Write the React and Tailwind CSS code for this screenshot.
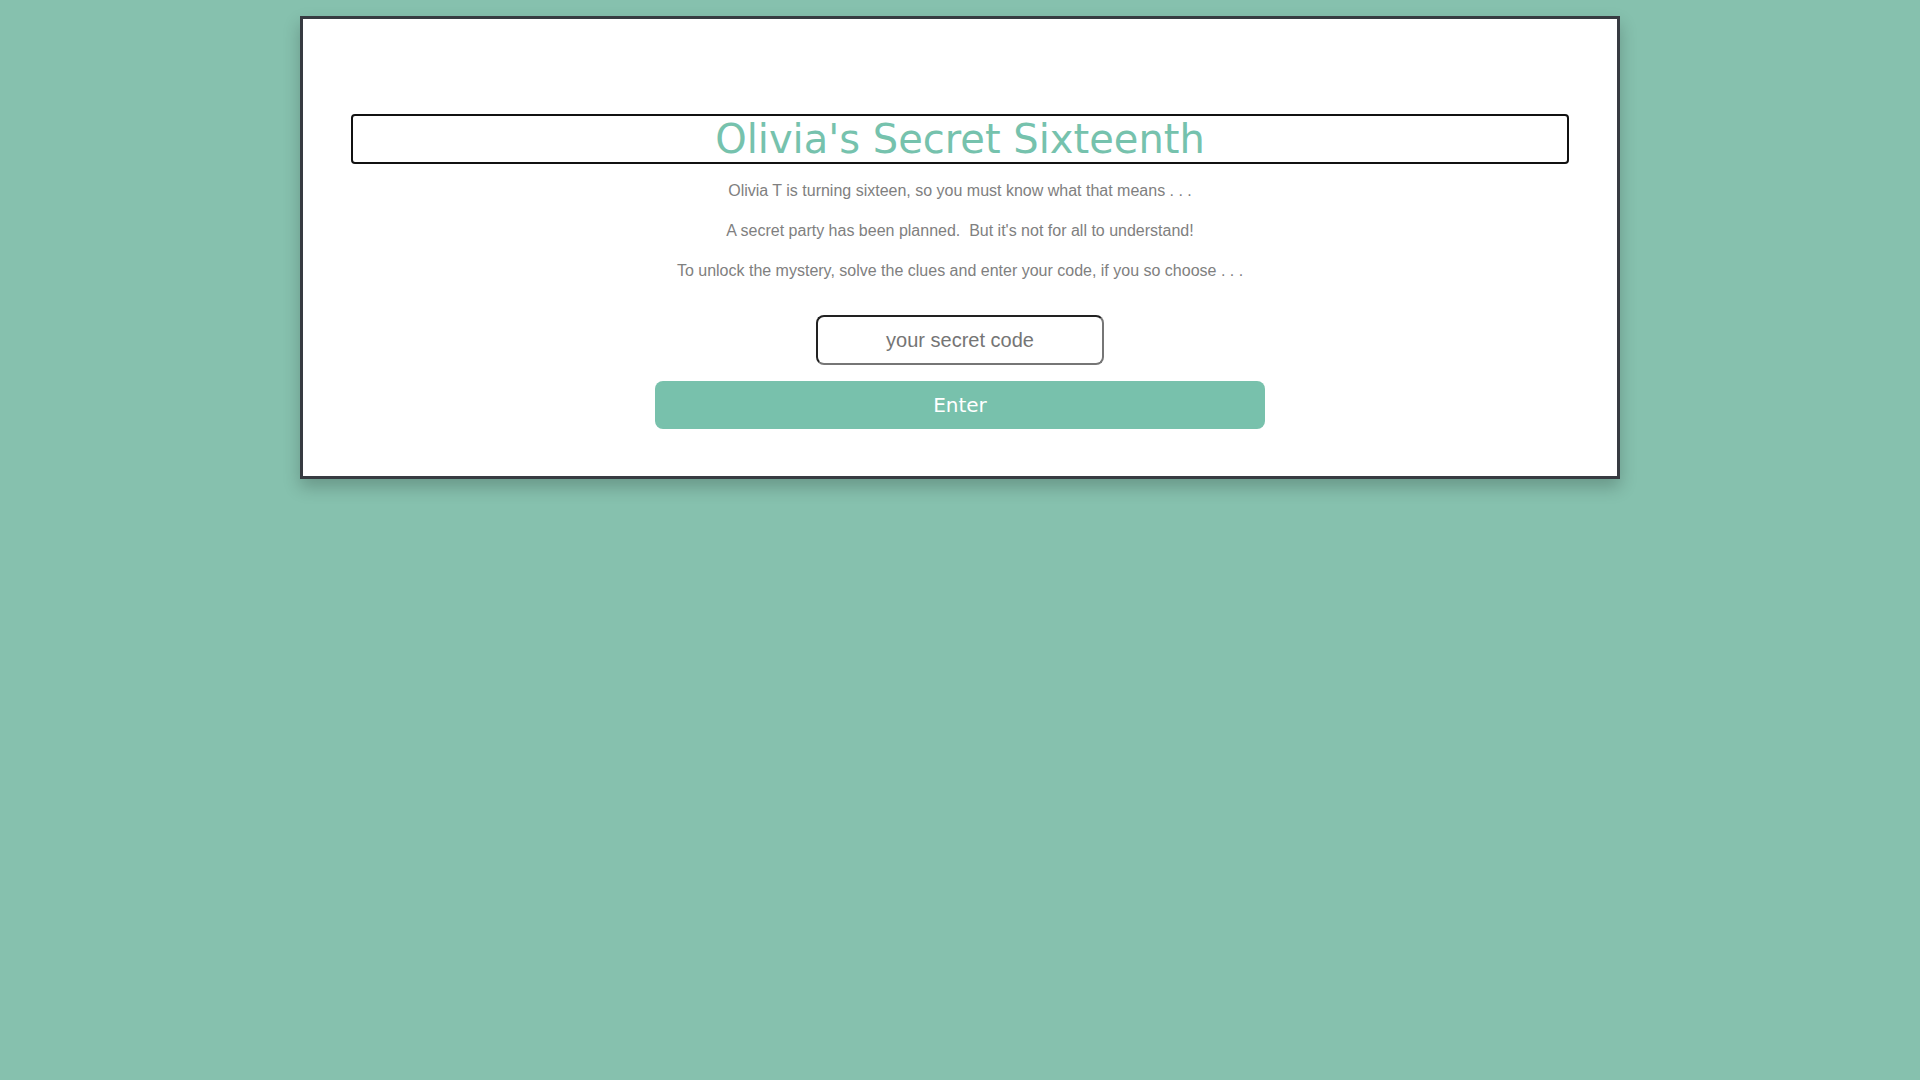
export default function App() {
  return (
    <div className="min-h-screen bg-[#86c1ae] pt-[16px] font-['Liberation_Sans',Arial,sans-serif]">
      <div className="mx-auto w-[1320px] border-[3px] border-[#373b41] bg-white px-[48px] pt-[95px] pb-[47px] shadow-[0_8px_16px_rgba(0,0,0,0.22)]">
        <h1 className="flex h-[50px] items-center justify-center rounded-[4px] border-2 border-[#111111] font-['DejaVu_Sans',sans-serif] text-[40px] font-normal leading-none text-[#76c2ad]">
          Olivia's Secret Sixteenth
        </h1>

        <div className="mt-[15px] flex flex-col gap-4 text-center text-base leading-6 text-[#808080]">
          <p>Olivia T is turning sixteen, so you must know what that means . . .</p>
          <p>A secret party has been planned.&nbsp; But it's not for all to understand!</p>
          <p>To unlock the mystery, solve the clues and enter your code, if you so choose . . .</p>
        </div>

        <div className="mt-[32px] flex flex-col items-center">
          <input
            type="text"
            placeholder="your secret code"
            className="h-[50px] w-[288px] rounded-[8px] border-2 border-t-[#222222] border-l-[#222222] border-r-[#767676] border-b-[#767676] bg-white text-center text-[20px] text-[#333] outline-none placeholder:text-[#757575]"
          />
          <button className="mt-4 h-[48px] w-[610px] rounded-[8px] bg-[#78c1ac] font-['DejaVu_Sans',sans-serif] text-[20px] text-white">
            Enter
          </button>
        </div>
      </div>
    </div>
  );
}
